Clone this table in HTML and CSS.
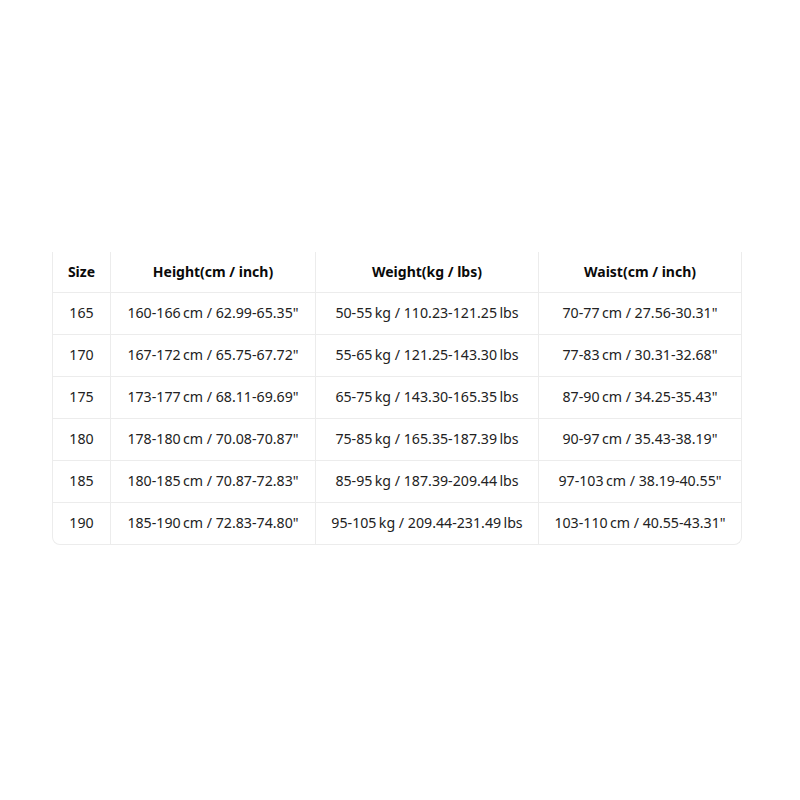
FILE: index.html
```html
<!DOCTYPE html>
<html>
<head>
<meta charset="utf-8">
<link rel="stylesheet" href="styles.css">
</head>
<body>
<div class="page">
  <div class="table-wrap">
    <table class="size-table">
      <colgroup>
        <col class="c1"><col class="c2"><col class="c3"><col class="c4">
      </colgroup>
      <thead>
        <tr><th>Size</th><th>Height(cm / inch)</th><th>Weight(kg / lbs)</th><th>Waist(cm / inch)</th></tr>
      </thead>
      <tbody>
        <tr><td>165</td><td>160-166&#8239;cm / 62.99-65.35"</td><td>50-55&#8239;kg / 110.23-121.25&#8239;lbs</td><td>70-77&#8239;cm / 27.56-30.31"</td></tr>
        <tr><td>170</td><td>167-172&#8239;cm / 65.75-67.72"</td><td>55-65&#8239;kg / 121.25-143.30&#8239;lbs</td><td>77-83&#8239;cm / 30.31-32.68"</td></tr>
        <tr><td>175</td><td>173-177&#8239;cm / 68.11-69.69"</td><td>65-75&#8239;kg / 143.30-165.35&#8239;lbs</td><td>87-90&#8239;cm / 34.25-35.43"</td></tr>
        <tr><td>180</td><td>178-180&#8239;cm / 70.08-70.87"</td><td>75-85&#8239;kg / 165.35-187.39&#8239;lbs</td><td>90-97&#8239;cm / 35.43-38.19"</td></tr>
        <tr><td>185</td><td>180-185&#8239;cm / 70.87-72.83"</td><td>85-95&#8239;kg / 187.39-209.44&#8239;lbs</td><td>97-103&#8239;cm / 38.19-40.55"</td></tr>
        <tr><td>190</td><td>185-190&#8239;cm / 72.83-74.80"</td><td>95-105&#8239;kg / 209.44-231.49&#8239;lbs</td><td>103-110&#8239;cm / 40.55-43.31"</td></tr>
      </tbody>
    </table>
  </div>
</div>
</body>
</html>
```
FILE: styles.css
```css
html, body {
  margin: 0;
  padding: 0;
  background: #fff;
}
.page {
  padding: 252px 58px 0 52px;
}
.table-wrap {
  width: 688px;
  border-left: 1px solid #ececec;
  border-right: 1px solid #ececec;
  border-bottom: 1px solid #ececec;
  border-radius: 0 0 8px 8px;
  overflow: hidden;
}
.size-table {
  width: 688px;
  table-layout: fixed;
  border-collapse: separate;
  border-spacing: 0;
  font-family: "Noto Sans", "Open Sans", sans-serif;
  font-size: 14.2px;
  color: #222;
}
.c1 { width: 58px; }
.c2 { width: 205px; }
.c3 { width: 223px; }
.c4 { width: 202px; }
.size-table th,
.size-table td {
  text-align: center;
  padding: 0 0 2px 0;
  box-sizing: border-box;
  border-right: 1px solid #ececec;
  border-bottom: 1px solid #ececec;
  white-space: nowrap;
}
.size-table th:last-child,
.size-table td:last-child {
  border-right: none;
}
.size-table th {
  height: 41px;
  font-weight: 700;
  color: #0a0a0a;
  font-size: 14px;
}
.size-table td {
  height: 42px;
}
.size-table tbody tr:last-child td {
  border-bottom: none;
  height: 41px;
}
```
